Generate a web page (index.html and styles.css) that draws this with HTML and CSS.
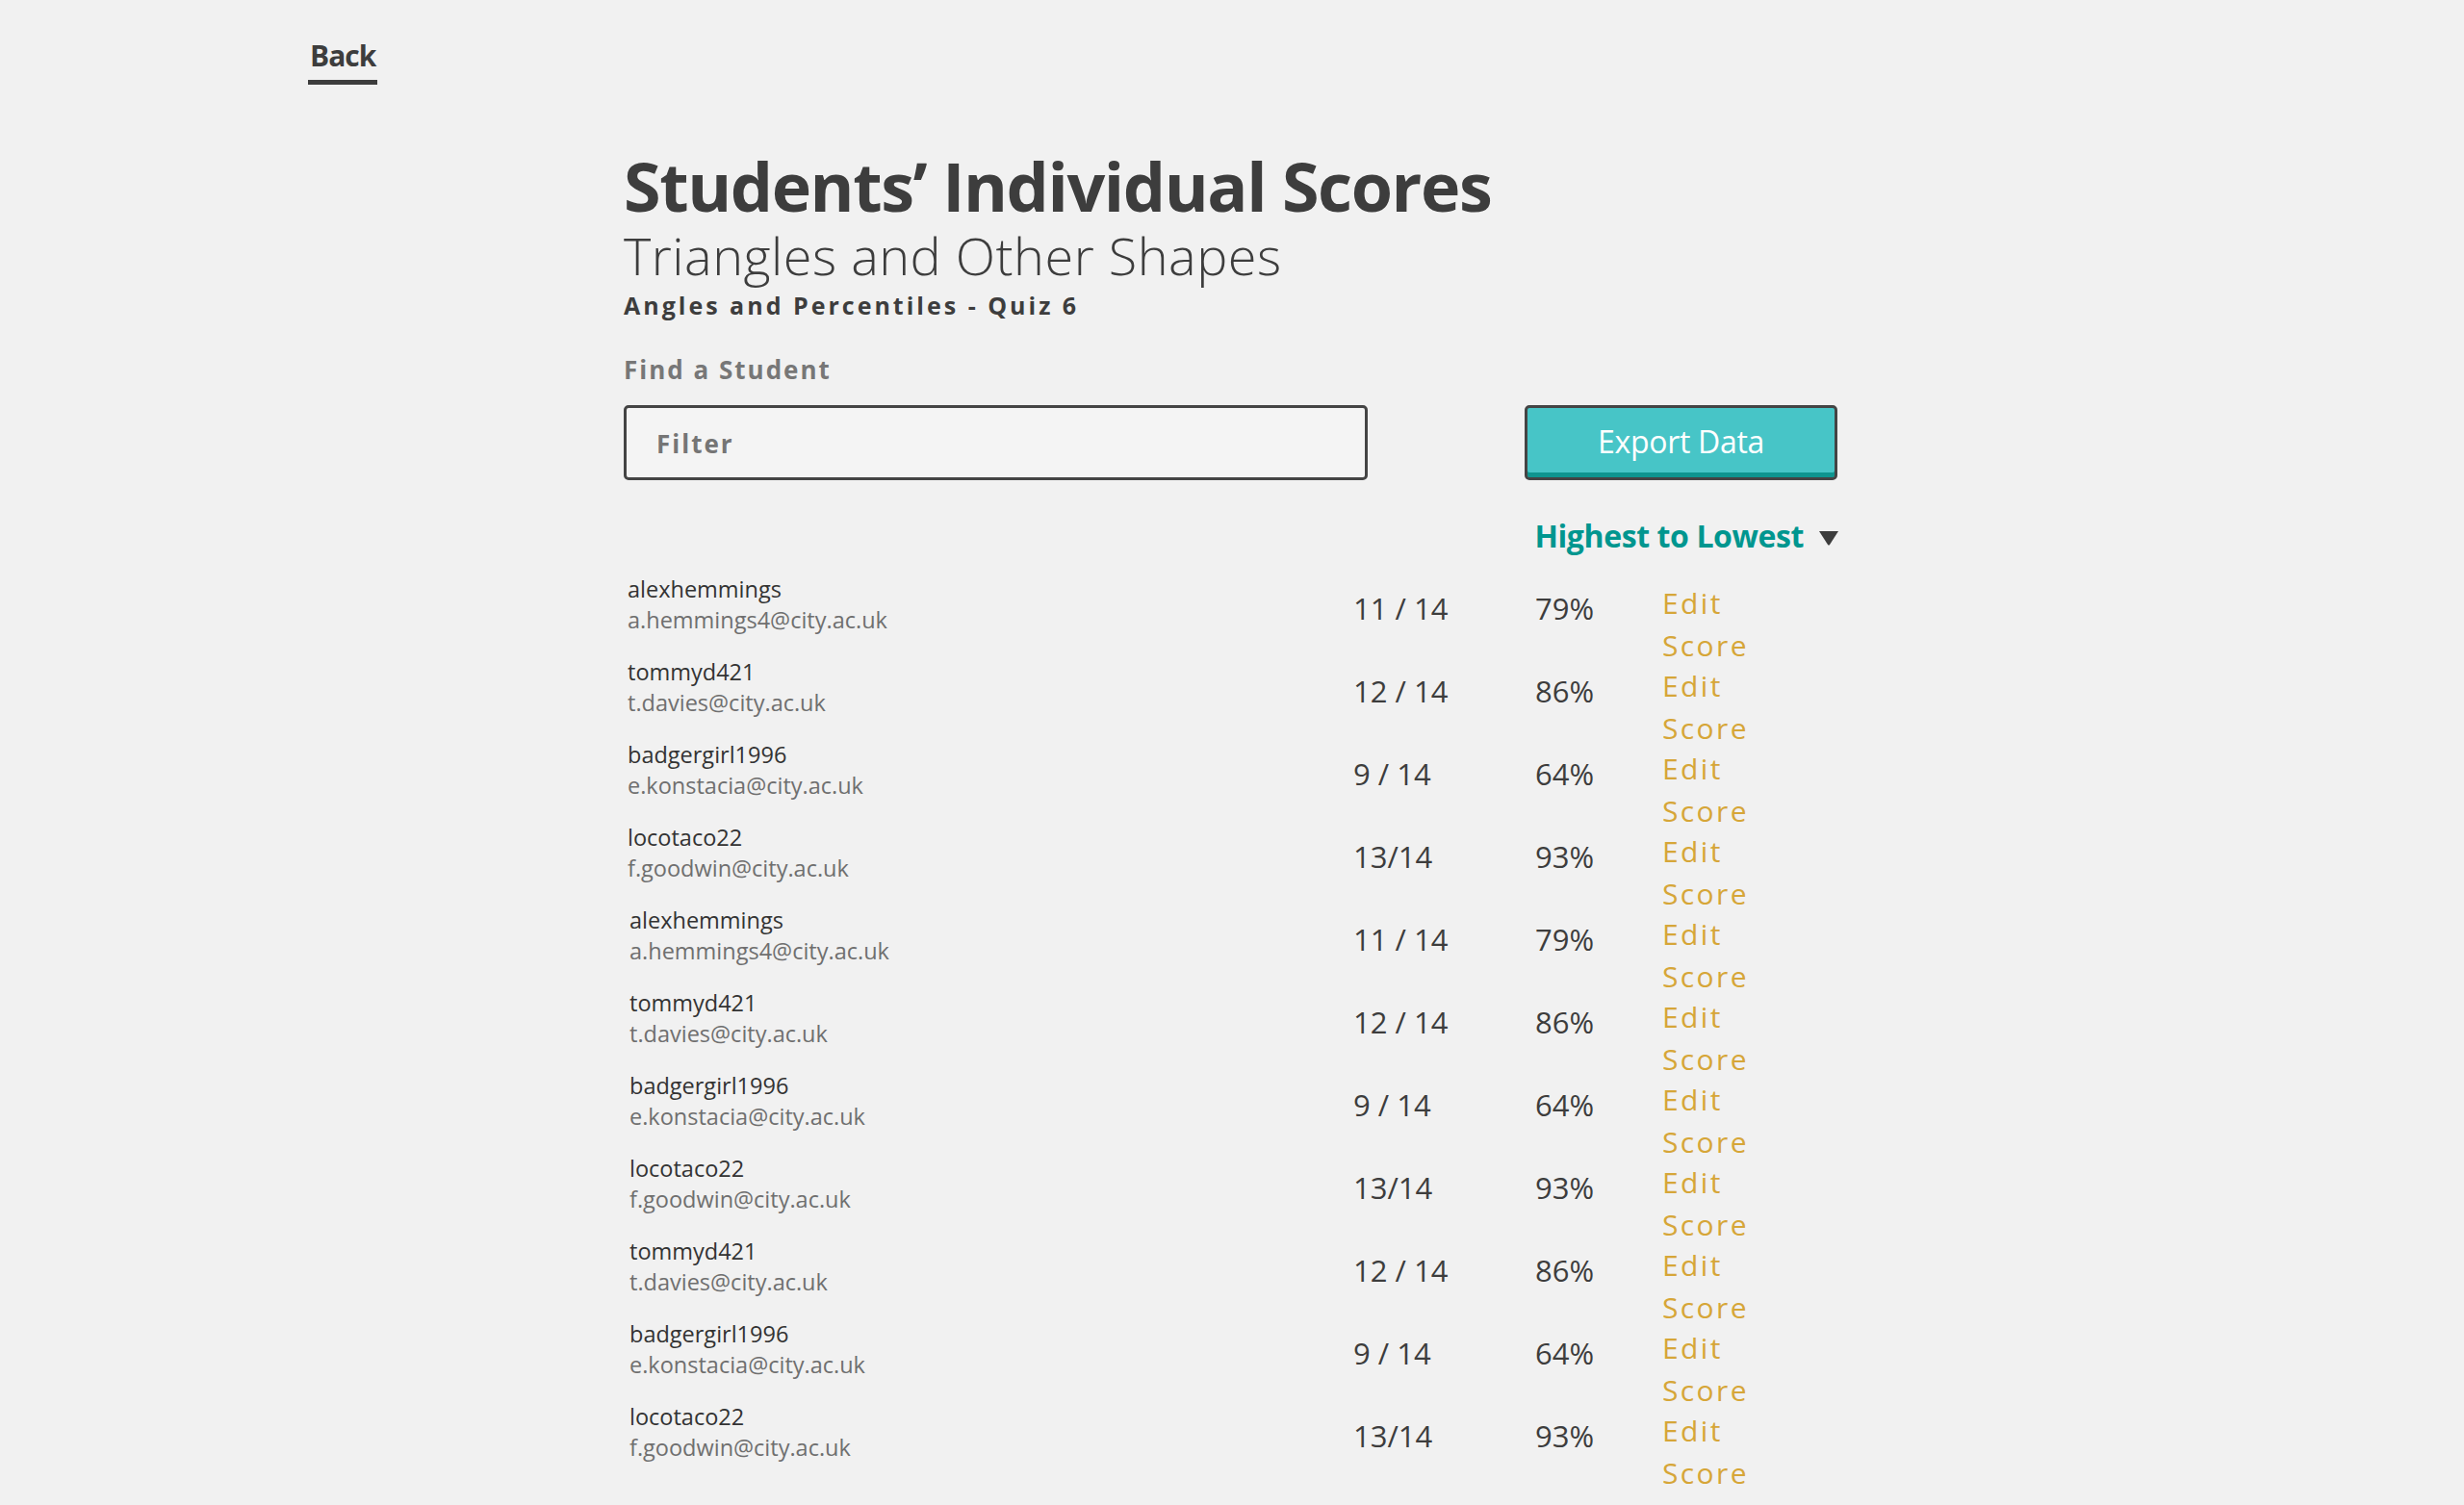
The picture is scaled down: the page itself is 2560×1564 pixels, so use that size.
FILE: index.html
```html
<!DOCTYPE html>
<html lang="en">
<head>
<meta charset="utf-8">
<title>Students’ Individual Scores</title>
<link rel="stylesheet" href="styles.css">
</head>
<body>
<header class="topbar">
  <a class="back" href="#">Back</a>
</header>
<main class="page">
  <h1 class="title">Students’ Individual Scores</h1>
  <p class="subtitle">Triangles and Other Shapes</p>
  <p class="quiz">Angles and Percentiles - Quiz 6</p>
  <div class="find-label">Find a Student</div>
  <div class="toolbar">
    <div class="filter"><span class="filter-text">Filter</span></div>
    <button class="export">Export Data</button>
  </div>
  <div class="sort-row">
    <span class="sort">Highest to Lowest</span>
    <svg class="caret" width="20" height="15" viewBox="0 0 20 15"><path d="M0 0 H20 L11 14 Q10 15 9 14 Z" fill="#3d3d3d"/></svg>
  </div>
  <ul class="list">
    <li class="row"><div class="who"><div class="name">alexhemmings</div><div class="email">a.hemmings4@city.ac.uk</div></div><div class="score">11 / 14</div><div class="pct">79%</div><a class="edit" href="#">Edit<br>Score</a></li>
    <li class="row"><div class="who"><div class="name">tommyd421</div><div class="email">t.davies@city.ac.uk</div></div><div class="score">12 / 14</div><div class="pct">86%</div><a class="edit" href="#">Edit<br>Score</a></li>
    <li class="row"><div class="who"><div class="name">badgergirl1996</div><div class="email">e.konstacia@city.ac.uk</div></div><div class="score">9 / 14</div><div class="pct">64%</div><a class="edit" href="#">Edit<br>Score</a></li>
    <li class="row"><div class="who"><div class="name">locotaco22</div><div class="email">f.goodwin@city.ac.uk</div></div><div class="score">13/14</div><div class="pct">93%</div><a class="edit" href="#">Edit<br>Score</a></li>
    <li class="row shifted"><div class="who"><div class="name">alexhemmings</div><div class="email">a.hemmings4@city.ac.uk</div></div><div class="score">11 / 14</div><div class="pct">79%</div><a class="edit" href="#">Edit<br>Score</a></li>
    <li class="row shifted"><div class="who"><div class="name">tommyd421</div><div class="email">t.davies@city.ac.uk</div></div><div class="score">12 / 14</div><div class="pct">86%</div><a class="edit" href="#">Edit<br>Score</a></li>
    <li class="row shifted"><div class="who"><div class="name">badgergirl1996</div><div class="email">e.konstacia@city.ac.uk</div></div><div class="score">9 / 14</div><div class="pct">64%</div><a class="edit" href="#">Edit<br>Score</a></li>
    <li class="row shifted"><div class="who"><div class="name">locotaco22</div><div class="email">f.goodwin@city.ac.uk</div></div><div class="score">13/14</div><div class="pct">93%</div><a class="edit" href="#">Edit<br>Score</a></li>
    <li class="row shifted"><div class="who"><div class="name">tommyd421</div><div class="email">t.davies@city.ac.uk</div></div><div class="score">12 / 14</div><div class="pct">86%</div><a class="edit" href="#">Edit<br>Score</a></li>
    <li class="row shifted"><div class="who"><div class="name">badgergirl1996</div><div class="email">e.konstacia@city.ac.uk</div></div><div class="score">9 / 14</div><div class="pct">64%</div><a class="edit" href="#">Edit<br>Score</a></li>
    <li class="row shifted"><div class="who"><div class="name">locotaco22</div><div class="email">f.goodwin@city.ac.uk</div></div><div class="score">13/14</div><div class="pct">93%</div><a class="edit" href="#">Edit<br>Score</a></li>
  </ul>
</main>
</body>
</html>
```

FILE: styles.css
```css
* { box-sizing: border-box; }
html, body { margin: 0; padding: 0; }
body {
  background: #f1f1f1;
  color: #3d3d3d;
  font-family: "Open Sans", "Noto Sans", sans-serif;
  height: 1564px;
  overflow: hidden;
}
.topbar {
  padding: 38px 0 0 320px;
  height: 150px;
}
.back {
  display: inline-block;
  font-size: 30px;
  font-weight: 700;
  line-height: 40px;
  color: #3d3d3d;
  text-decoration: none;
  padding: 0 2px 5px;
  border-bottom: 5px solid #3d3d3d;
  letter-spacing: -1px;
}
.page {
  width: 1264px;
  margin: 0 auto;
}
.title {
  margin: 0;
  font-size: 70px;
  font-weight: 700;
  line-height: 86px;
  letter-spacing: -1.4px;
}
.subtitle {
  margin: 0;
  font-size: 54px;
  font-weight: 300;
  line-height: 58px;
  letter-spacing: 0.5px;
}
.quiz {
  margin: 0;
  font-size: 25px;
  font-weight: 700;
  line-height: 42px;
  letter-spacing: 3px;
  padding-top: 2px;
}
.find-label {
  margin-top: 28px;
  font-size: 26px;
  font-weight: 700;
  line-height: 36px;
  letter-spacing: 2px;
  color: #777;
}
.toolbar {
  margin-top: 19px;
  display: flex;
  justify-content: space-between;
  align-items: flex-start;
}
.filter {
  width: 773px;
  height: 78px;
  border: 3px solid #444;
  border-radius: 5px;
  background: #f4f4f4;
  display: flex;
  align-items: center;
  padding-left: 31px;
}
.filter-text {
  font-size: 26px;
  font-weight: 700;
  color: #757575;
  letter-spacing: 2px;
  padding-top: 2px;
}
.export {
  width: 325px;
  height: 78px;
  margin-right: 3px;
  border: 3px solid #444;
  border-radius: 5px;
  background: #47c5c7;
  box-shadow: inset 0 -5px 0 #0e958f;
  color: #fff;
  font-family: inherit;
  font-size: 32px;
  font-weight: 500;
  letter-spacing: -0.3px;
  padding: 0 0 4px;
}
.sort-row {
  display: flex;
  justify-content: flex-end;
  align-items: center;
  gap: 16px;
  margin-top: 35px;
  padding-right: 2px;
  height: 44px;
}
.sort {
  font-size: 32px;
  font-weight: 700;
  color: #00968f;
  letter-spacing: -0.4px;
}
.caret { margin-top: 6px; }
.list {
  list-style: none;
  margin: 19px 0 0;
  padding: 0;
}
.row {
  display: grid;
  grid-template-columns: 1fr 189px 132px 185px;
  height: 86px;
}
.row.shifted { padding-left: 2px; }
.who { padding-left: 4px; }
.name {
  font-size: 23.5px;
  font-weight: 500;
  line-height: 31px;
  color: #333;
}
.email {
  font-size: 23.5px;
  line-height: 33px;
  color: #6f6f6f;
}
.score, .pct {
  font-size: 31px;
  font-weight: 500;
  line-height: 44px;
  padding-top: 13px;
  color: #3d3d3d;
}
.edit {
  font-size: 30px;
  font-weight: 500;
  line-height: 44px;
  padding-top: 8px;
  color: #d6a638;
  text-decoration: none;
  letter-spacing: 2.4px;
  align-self: start;
}
```
